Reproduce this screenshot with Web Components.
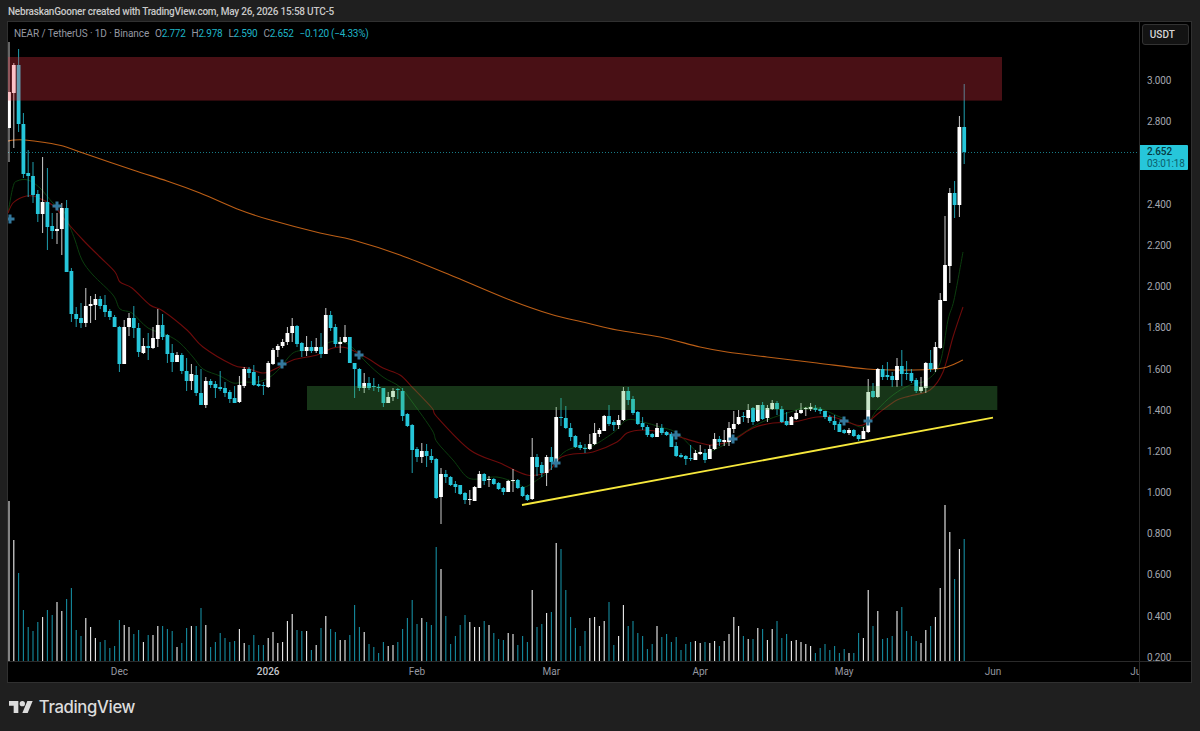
<!DOCTYPE html>
<html><head><meta charset="utf-8"><title>NEAR / TetherUS</title>
<style>html,body{margin:0;padding:0;background:#1f1f1f;}</style></head>
<body>
<tv-app>
  <tv-attribution slot="top">NebraskanGooner created with TradingView.com, May 26, 2026 15:58 UTC-5</tv-attribution>
  <tv-chart slot="chart">
    <tv-legend slot="legend" symbol="NEAR / TetherUS · 1D · Binance">
      <tv-ohlc label="O" value="2.772"></tv-ohlc>
      <tv-ohlc label="H" value="2.978"></tv-ohlc>
      <tv-ohlc label="L" value="2.590"></tv-ohlc>
      <tv-ohlc label="C" value="2.652"></tv-ohlc>
      <tv-ohlc value="−0.120 (−4.33%)"></tv-ohlc>
    </tv-legend>
    <tv-series slot="series"></tv-series>
    <tv-price-scale slot="prices" unit="USDT"></tv-price-scale>
    <tv-time-scale slot="times"></tv-time-scale>
  </tv-chart>
  <tv-brand slot="bottom">TradingView</tv-brand>
</tv-app>
<script>
const FONT = 'Roboto,"Noto Sans",sans-serif';
function def(name, html, extra){
  class E extends HTMLElement{
    constructor(){super();this.attachShadow({mode:'open'}).innerHTML=html;}
    connectedCallback(){ if(extra) extra(this); }
  }
  customElements.define(name,E);
}
def('tv-app',`<style>:host{display:flex;flex-direction:column;width:1200px;height:731px;background:#1f1f1f;overflow:hidden;box-sizing:border-box;padding:0 8px 0 7px}</style><slot name="top"></slot><slot name="chart"></slot><slot name="bottom"></slot>`);
def('tv-attribution',`<style>:host{display:flex;align-items:center;height:21px;padding:2px 0 0 1px;box-sizing:border-box;font:500 10px ${FONT};letter-spacing:-.22px;color:#c9c9c9;white-space:nowrap;flex:none}</style><slot></slot>`);
def('tv-chart',`<style>
:host{display:grid;grid-template-columns:1131px 1fr;grid-template-rows:639px 21px;height:662px;box-sizing:border-box;border:1px solid #303030;background:#000;flex:none;position:relative}
.canvas{position:relative;overflow:hidden}
.corner{border-left:1px solid #2a2a2a;border-top:1px solid #2a2a2a}
</style>
<div class="canvas"><slot name="series"></slot><slot name="legend"></slot></div>
<slot name="prices"></slot>
<slot name="times"></slot>
<div class="corner"></div>`);
def('tv-legend',`<style>
:host{position:absolute;left:6px;top:4px;display:flex;align-items:center;height:15px;font:400 10px ${FONT};letter-spacing:-.1px;color:#9598a1;white-space:nowrap}
.s{margin-right:6px}
.v{display:flex;gap:6px;letter-spacing:-.25px}
</style><span class="s"></span><span class="v"><slot></slot></span>`,el=>{el.shadowRoot.querySelector('.s').textContent=el.getAttribute('symbol');});
def('tv-ohlc',`<style>:host{display:inline-block;color:#9598a1}b{font-weight:400;color:#1fb3c6}</style><span class="l"></span><b></b>`,el=>{
  el.shadowRoot.querySelector('.l').textContent=el.getAttribute('label')||'';
  el.shadowRoot.querySelector('b').textContent=el.getAttribute('value');
});
def('tv-price-tag',`<style>
:host{position:absolute;left:0;top:123.3px;width:47.5px;height:24.7px;background:#26c6da;box-sizing:border-box;padding:1px 0 0 7px;display:flex;flex-direction:column;font:400 10px/11.5px ${FONT};letter-spacing:-.1px;color:#063a42;border-radius:0 1px 1px 0}
.t{color:#0b5e6c}
.p{font-weight:500}
</style><span class="p">2.652</span><span class="t">03:01:18</span>`);
def('tv-price-scale',`<style>
:host{display:flex;flex-direction:column;position:relative;border-left:1px solid #2a2a2a;box-sizing:border-box;font:400 10px ${FONT};letter-spacing:-.2px;color:#a3a6af;height:639px}
.unit{flex:none;height:21px;width:46.5px;margin:2.3px 0 14.8px 2.3px;box-sizing:border-box;border:1px solid #333;border-radius:3px;background:#131313;color:#d6d6d6;font-size:10px;letter-spacing:0;font-weight:500;display:flex;align-items:center;padding-left:6.5px}
.r{flex:none;height:41.2px;display:flex;align-items:center;padding-left:7px}
</style><div class="unit"></div><div class="rows"></div><tv-price-tag></tv-price-tag>`,el=>{
  const s=el.shadowRoot;s.querySelector('.unit').textContent=el.getAttribute('unit');
  const rows=s.querySelector('.rows');
  rows.innerHTML=['3.000','2.800','','2.400','2.200','2.000','1.800','1.600','1.400','1.200','1.000','0.800','0.600','0.400','0.200'].map(t=>`<div class="r">${t}</div>`).join('');
});
def('tv-time-scale',`<style>
:host{display:flex;height:21px;box-sizing:border-box;border-top:1px solid #2a2a2a;overflow:hidden;font:400 10px ${FONT};color:#9598a1;white-space:nowrap;align-items:center;padding-bottom:1px}
.c{flex:none;height:100%;display:flex;align-items:center}
.c span{transform:translateX(-50%);display:block}
.y{color:#c3c5cb;font-weight:500}
</style><div class="row" style="display:flex;height:100%"></div>`,el=>{
  const d=[[111.4,''],[148.8,'Dec'],[148.8,'2026','y'],[134.4,'Feb'],[148.8,'Mar'],[144,'Apr'],[148.8,'May'],[144,'Jun'],[60,'Jul']];
  el.shadowRoot.querySelector('.row').innerHTML=d.map(([w,t,c])=>`<div class="c" style="width:${w}px"><span class="${c||''}">${t}</span></div>`).join('');
});
def('tv-brand',`<style>
:host{display:flex;align-items:center;gap:5.5px;flex:none;height:48px;padding:0 0 0 2.3px;box-sizing:border-box;font:500 16.7px Inter,Roboto,sans-serif;letter-spacing:-.35px;color:#dcdcdc}
svg{width:24px;height:12px;fill:#dcdcdc;flex:none;margin-top:-1px}
</style><svg viewBox="0 4 36 18"><path d="M14 22H7V11H0V4h14v18zM28 22h-8l7.5-18h8L28 22z"/><circle cx="20" cy="8" r="4"/></svg><slot></slot>`);

const C=`92 128 42 162 1|65 93 63 148 1|65 124 49 132 0|124 174 113 178 0|173 176 150 197 0|176 195 162 203 0|194 214 190 222 0|202 214 157 233 1|202 227 168 250 0|226 231 213 239 0|229 231 213 244 1|208 229 203 255 1|208 272 200 272 0|271 314 268 322 0|314 319 307 327 0|318 323 303 328 0|306 323 288 327 1|304 306 296 323 1|299 305 294 320 1|299 306 296 309 0|305 312 295 317 0|311 317 309 320 0|317 327 315 327 0|327 364 326 372 0|327 364 320 364 1|318 327 313 336 1|318 328 306 338 0|328 352 323 357 0|346 353 338 354 1|346 348 333 360 0|338 348 327 349 1|325 339 309 347 1|325 337 314 340 0|335 354 334 363 0|353 362 344 372 0|355 362 352 362 1|355 371 353 374 0|371 381 358 391 0|374 381 364 390 1|375 393 366 396 0|393 405 369 405 0|381 405 377 408 1|381 385 379 388 0|384 388 381 398 0|387 389 371 391 0|388 393 382 397 0|392 399 390 403 0|398 403 386 403 0|385 402 376 403 1|369 386 367 388 1|369 373 367 378 0|372 385 365 386 0|384 386 376 387 0|385 386 382 395 0|363 387 361 388 1|350 364 348 365 1|346 350 344 357 1|342 346 339 348 1|333 342 327 345 1|326 333 318 342 1|326 344 325 347 0|343 351 342 357 0|347 351 336 356 1|347 351 341 353 0|347 351 338 353 1|347 354 333 358 0|315 354 308 354 1|315 328 311 331 0|327 344 324 347 0|342 344 337 353 1|337 342 325 343 1|337 363 337 363 0|363 369 363 398 0|369 388 368 391 0|383 388 373 393 1|383 388 377 390 0|386 387 378 391 0|387 388 384 392 0|388 403 388 407 0|397 403 392 403 1|391 397 388 401 1|389 390 388 399 0|391 416 388 421 0|414 426 413 427 0|425 450 424 473 0|449 457 447 462 0|451 457 443 463 1|451 456 444 467 0|456 460 449 463 0|459 498 458 499 0|474 497 468 524 1|474 477 470 483 0|477 485 476 486 0|484 487 481 493 0|485 494 485 495 0|493 500 492 504 0|499 500 490 505 1|487 501 486 501 1|474 488 471 488 1|474 481 473 485 0|479 480 476 487 1|479 484 478 485 0|483 489 482 490 0|488 492 487 495 0|481 492 480 492 1|480 481 469 492 1|480 488 479 489 0|487 496 486 497 0|495 500 494 501 0|457 499 438 500 1|457 467 454 476 0|465 473 462 477 0|457 473 455 486 1|457 462 447 470 0|417 462 407 465 1|417 418 398 426 0|418 428 406 429 0|428 437 423 441 0|436 447 435 448 0|445 448 442 450 0|448 449 444 453 0|444 449 434 450 1|433 444 423 445 1|430 434 428 437 1|416 431 415 431 1|416 424 405 426 0|422 425 420 431 0|420 425 415 429 1|391 420 387 421 1|391 400 387 405 0|399 413 396 415 0|412 424 411 425 0|423 427 417 430 0|427 435 425 437 0|434 437 433 438 0|428 437 423 437 1|428 433 424 435 0|432 435 431 436 0|434 447 432 447 0|446 456 442 457 0|455 457 453 458 0|456 459 455 465 0|458 459 445 461 0|453 460 450 460 1|452 454 445 455 1|453 460 449 463 0|449 459 445 459 1|439 449 433 450 1|439 442 436 446 0|440 442 430 446 1|428 442 422 446 1|424 429 411 433 1|417 424 410 425 1|416 417 412 422 0|410 418 404 423 1|408 422 407 425 0|405 421 405 422 1|405 419 402 420 0|408 418 405 422 1|403 409 400 410 1|403 409 401 415 0|409 422 406 423 0|421 425 412 426 0|417 425 416 425 1|413 419 410 420 1|410 413 403 414 1|408 409 407 416 1|407 409 403 411 1|408 410 405 412 0|409 411 407 414 0|411 417 411 419 0|417 421 415 423 0|421 425 415 430 0|424 432 422 432 0|430 433 429 434 0|430 433 428 435 1|430 436 429 437 0|435 439 434 441 0|431 439 427 439 1|392 432 379 433 1|391 397 383 398 0|369 397 368 398 1|369 377 365 380 0|375 377 362 380 0|376 380 372 387 0|366 380 358 387 1|366 374 350 386 0|373 374 361 380 0|373 381 369 383 0|380 391 378 393 0|387 391 377 393 1|363 388 362 393 1|363 369 350 372 0|347 369 342 372 1|300 348 293 349 1|265 301 216 301 1|193 266 188 283 1|193 205 181 218 0|127 205 116 217 1|127 152 84 164 0`.split('|').map(r=>r.split(' ').map(Number));
const V=[501,540,573,610,627,631,622,617,610,615,602,611,599,588,630,636,618,627,638,642,640,648,646,620,625,627,634,630,642,635,635,626,626,629,631,647,643,628,626,626,608,625,647,642,633,638,642,641,629,643,645,635,645,645,638,632,643,642,621,614,630,631,631,650,645,628,616,629,632,640,640,635,605,627,632,644,647,653,642,646,645,642,629,618,600,624,618,622,625,547,569,616,644,636,625,615,622,627,627,621,625,633,639,640,633,634,645,636,642,590,627,624,613,612,543,549,590,617,628,646,631,618,617,626,621,602,645,636,605,626,621,633,636,649,644,626,637,634,642,637,650,644,642,641,643,642,643,641,646,641,634,617,626,636,639,639,628,629,640,629,621,638,634,641,640,642,644,646,653,648,644,650,646,653,649,653,653,633,638,590,626,611,639,638,636,611,607,631,636,641,643,630,626,617,588,505,532,579,549,539];
const O=[[8,141],[14,140],[25,140],[45,142.5],[63,146],[83,153],[133,170],[167,181],[200,193],[240,210],[267,219],[320,233],[353,240],[400,255],[455,277],[510,300],[550,314],[587,323],[617,330],[660,337],[700,347],[727,352],[767,357],[817,363],[867,369],[913,370],[943,368],[963,360]];
const G=[[8,213],[13,187],[17,181],[28,180],[40,188],[53,203],[63,210],[70,227],[75,240],[82,260],[93,275],[113,295],[120,309],[132,313],[148,328],[167,335],[180,343],[193,357],[203,369],[220,376],[233,383],[243,382],[257,382],[270,377],[280,368],[293,353],[307,350],[320,348],[330,342],[343,342],[353,348],[367,363],[383,377],[400,387],[413,403],[432,430],[437,442],[453,460],[467,477],[480,479],[497,477],[517,483],[525,487],[540,478],[550,470],[563,453],[577,447],[590,447],[613,433],[627,420],[643,422],[660,427],[677,433],[700,453],[720,447],[737,437],[760,423],[787,413],[813,407],[840,417],[863,427],[877,410],[893,395],[910,385],[927,380],[940,363],[948,320],[954,300],[963,252]];
const R=[[8,213],[13,203],[23,197],[33,196],[43,200],[55,207],[65,220],[83,240],[100,257],[115,272],[120,282],[132,288],[150,305],[163,311],[187,330],[203,347],[233,365],[247,368],[263,373],[277,368],[293,360],[317,355],[333,348],[347,348],[367,358],[383,368],[400,375],[413,388],[432,408],[437,417],[470,450],[500,463],[527,475],[547,472],[560,458],[573,454],[593,452],[617,442],[627,433],[643,430],[667,433],[683,438],[700,443],[713,445],[733,440],[753,428],[773,423],[793,422],[817,417],[833,417],[850,423],[863,425],[880,412],[897,400],[910,396],[930,390],[943,372],[953,337],[963,307]];
const M=[[10,219],[57,206],[282,364],[359,355],[556,463],[676,435],[733,439],[844,421],[868,421]];
function smooth(p){let d=`M${p[0][0]} ${p[0][1]}`;for(let i=0;i<p.length-1;i++){const a=p[Math.max(i-1,0)],b=p[i],c=p[i+1],e=p[Math.min(i+2,p.length-1)];
 d+=`C${(b[0]+(c[0]-a[0])/6).toFixed(1)} ${(b[1]+(c[1]-a[1])/6).toFixed(1)} ${(c[0]-(e[0]-b[0])/6).toFixed(1)} ${(c[1]-(e[1]-b[1])/6).toFixed(1)} ${c[0]} ${c[1]}`;}return d;}
def('tv-series',`<style>:host{display:block;width:1131px;height:639px}svg{display:block}</style><svg width="1131" height="639" viewBox="8 22 1131 639" xmlns="http://www.w3.org/2000/svg"></svg>`,el=>{
  const UP='#ffffff',DN='#26c6da',VD='#148a9e';let s='';
  s+=`<path d="M8 152.5H1139" stroke="#26c6da" stroke-opacity=".62" stroke-width="1" stroke-dasharray="1 2" fill="none"/>`;
  V.forEach((t,i)=>{const x=9+4.8*i,u=C[i][4];s+=`<rect x="${(x-.55).toFixed(2)}" y="${t}" width="1.1" height="${661-t}" fill="${u?'#efefef':VD}"/>`;});
  s+=`<path d="${smooth(G)}" fill="none" stroke="#0b3d0e" stroke-width="1"/>`;
  s+=`<path d="${smooth(R)}" fill="none" stroke="#6e0b0b" stroke-width="1.1"/>`;
  s+=`<path d="${smooth(O)}" fill="none" stroke="#bb5e16" stroke-width="1.15"/>`;
  C.forEach((c,i)=>{const x=9+4.8*i,col=c[4]?UP:DN;
    s+=`<rect x="${(x-.5).toFixed(2)}" y="${c[2]}" width="1" height="${c[3]-c[2]}" fill="${col}" fill-opacity=".8"/><rect x="${(x-1.9).toFixed(2)}" y="${c[0]}" width="3.8" height="${Math.max(c[1]-c[0],1)}" fill="${col}"/>`;});
  M.forEach(([x,y])=>{s+=`<path d="M${x-4.5} ${y}h9M${x} ${y-4.5}v9" stroke="#33789c" stroke-width="3" fill="none"/>`;});
  s+=`<path d="M522 505L993 417.7" stroke="#f7e83c" stroke-width="1.8" fill="none"/>`;
  s+=`<rect x="8" y="57" width="994" height="43.6" fill="rgb(242,54,69)" fill-opacity=".3"/>`;
  s+=`<rect x="307" y="386" width="690.3" height="24" fill="rgb(76,175,80)" fill-opacity=".3"/>`;
  el.shadowRoot.querySelector('svg').innerHTML=s;
});
</script>
</body></html>
